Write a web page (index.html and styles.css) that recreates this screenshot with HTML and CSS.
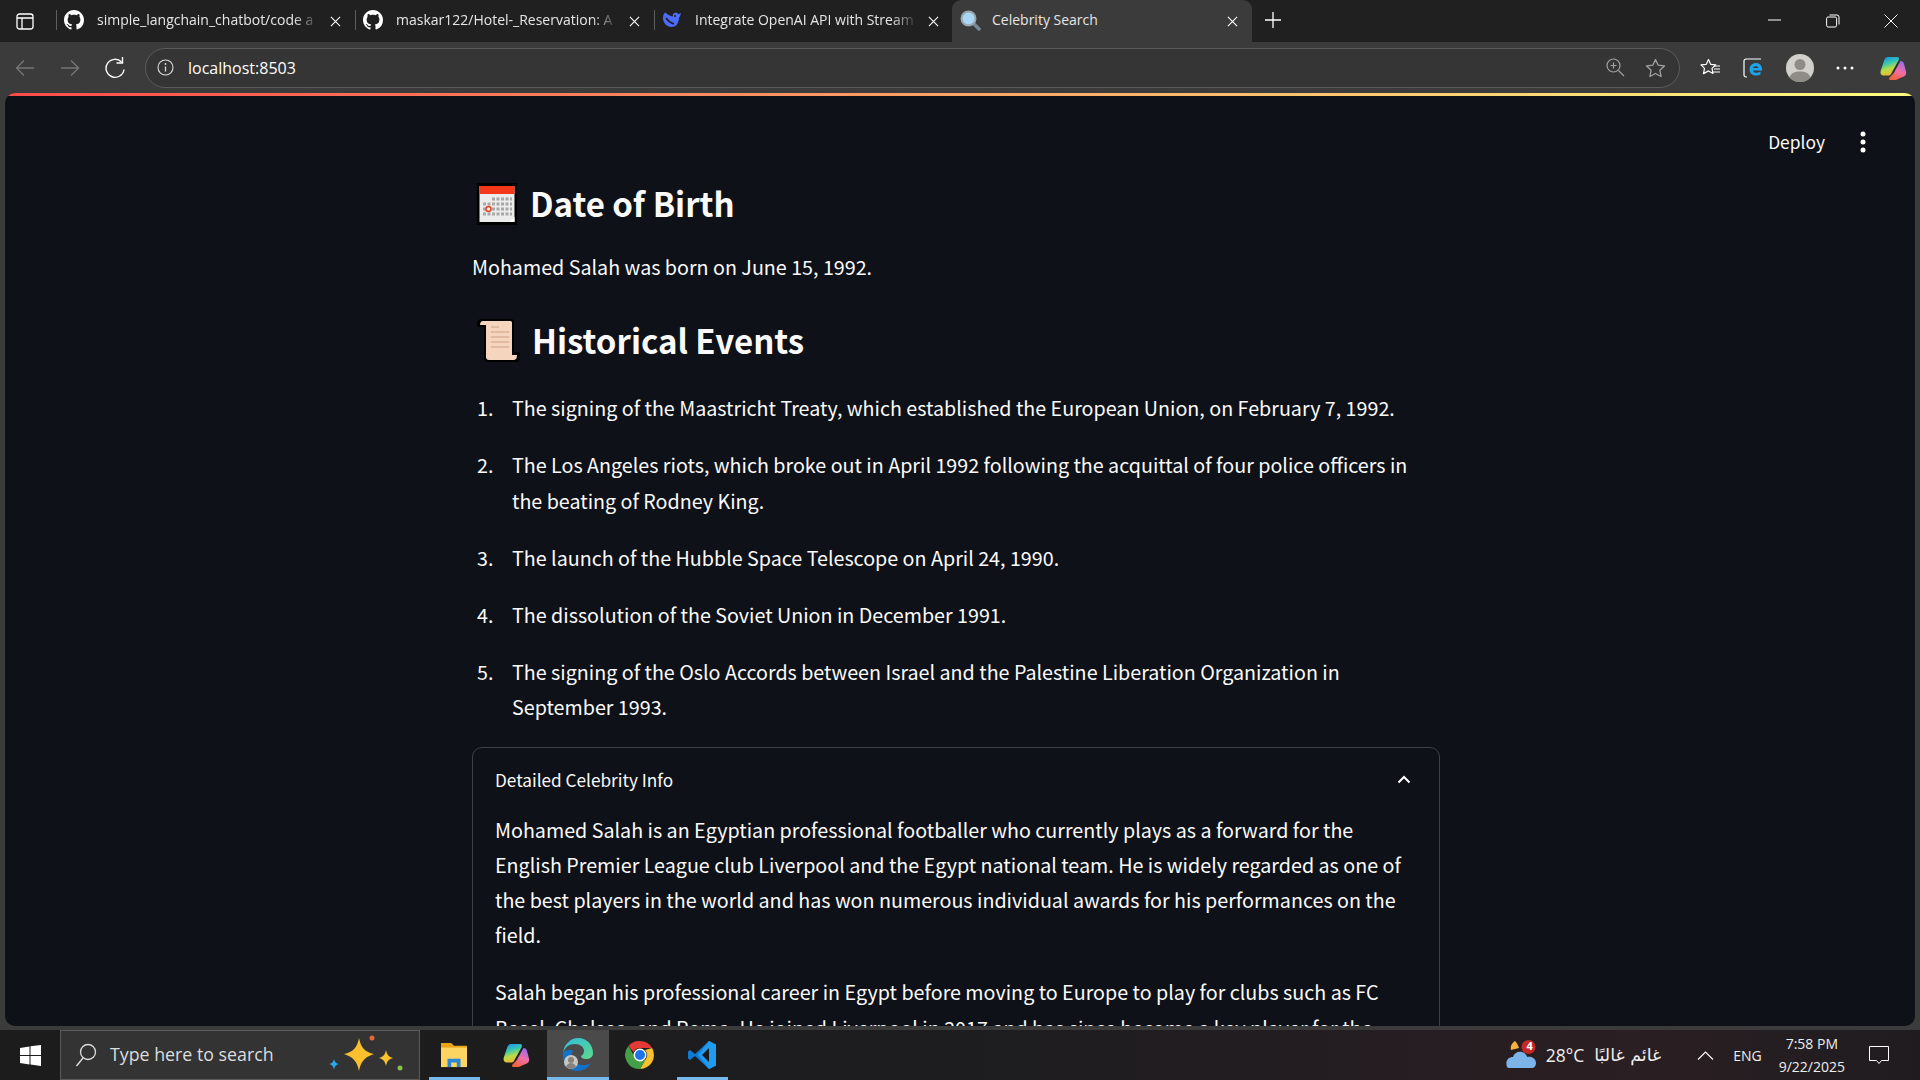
FILE: index.html
```html
<!DOCTYPE html>
<html lang="en">
<head>
    <meta charset="UTF-8">
    <meta name="viewport" content="width=device-width, initial-scale=1.0">
    <title>Celebrity Search</title>
    <link rel="stylesheet" href="styles.css">
</head>
<body>
    <svg class="defs" width="0" height="0">
        <symbol id="close" viewBox="0 0 12 12"><path d="M1 1l10 10M11 1L1 11" fill="none" stroke="currentColor" stroke-width="1.2"/></symbol>
        <symbol id="github" viewBox="0 0 16 16"><path fill="#fff" d="M8 0C3.58 0 0 3.58 0 8c0 3.54 2.29 6.53 5.47 7.59.4.07.55-.17.55-.38 0-.19-.01-.82-.01-1.49-2.01.37-2.53-.49-2.69-.94-.09-.23-.48-.94-.82-1.13-.28-.15-.68-.52-.01-.53.63-.01 1.08.58 1.23.82.72 1.21 1.87.87 2.33.66.07-.52.28-.87.51-1.07-1.78-.2-3.64-.89-3.64-3.95 0-.87.31-1.59.82-2.15-.08-.2-.36-1.02.08-2.12 0 0 .67-.21 2.2.82.64-.18 1.32-.27 2-.27.68 0 1.36.09 2 .27 1.53-1.04 2.2-.82 2.2-.82.44 1.1.16 1.92.08 2.12.51.56.82 1.27.82 2.15 0 3.07-1.87 3.75-3.65 3.95.29.25.54.73.54 1.48 0 1.07-.01 1.93-.01 2.2 0 .21.15.46.55.38A8.013 8.013 0 0016 8c0-4.42-3.58-8-8-8z"/></symbol>
        <linearGradient id="copA" x1="0.2" y1="0" x2="0.5" y2="1"><stop offset="0" stop-color="#1e8ff0"/><stop offset=".35" stop-color="#35c7b0"/><stop offset=".65" stop-color="#b5dc4a"/><stop offset="1" stop-color="#f7b42e"/></linearGradient>
        <linearGradient id="copB" x1="0.7" y1="0" x2="0.3" y2="1"><stop offset="0" stop-color="#9a6bf0"/><stop offset=".5" stop-color="#ef6fa8"/><stop offset="1" stop-color="#f5603a"/></linearGradient>
        <symbol id="copilot" viewBox="0 0 28 28">
            <path fill="url(#copA)" d="M9 3h9c2 0 2.500 1.200 1.500 3.500L13 18c-1 2-1.500 3.500-3.500 3.500H5C2 21.500 1 19.500 1.800 16.500L5 7C5.800 4.500 7 3 9 3z"/>
            <path fill="url(#copB)" d="M21.500 7c2 0 3 1.300 3.500 3l2 7.500c.7 3-1 5-3.500 5.500L19 25c-1 .7-2 1-3.500 1h-4c-1.500 0-2-1-1-2.500l4-4z"/>
            <path d="M19.500 8L14 19" stroke="#2a2a2a" stroke-width="1"/>
        </symbol>
    </svg>

    <div class="tabstrip">
        <svg class="side-btn" width="18" height="17" viewBox="0 0 18 17"><rect x="1" y="1" width="16" height="15" rx="2.500" fill="none" stroke="#fff" stroke-width="1.300"/><path d="M1 5h16M6 5v11" stroke="#fff" stroke-width="1.300" fill="none"/></svg>
        <div class="tab">
            <svg class="fav" width="20" height="20"><use href="#github"/></svg>
            <span class="tab-title">simple_langchain_chatbot/code a</span>
            <svg class="tab-close" width="11" height="11"><use href="#close"/></svg>
        </div>
        <div class="tab">
            <svg class="fav" width="20" height="20"><use href="#github"/></svg>
            <span class="tab-title">maskar122/Hotel-_Reservation: A</span>
            <svg class="tab-close" width="11" height="11"><use href="#close"/></svg>
        </div>
        <div class="tab">
            <svg class="fav" width="20" height="20" viewBox="0 0 20 20"><path fill="#4d6bfe" d="M19 3c-1 .6-1.800.8-2.600 1C15.500 3 14 2.500 12.500 3c-1.500.6-2 2-1.600 3.500C8 6 5.500 4.500 3.500 2.500 2 3 1 5 1 8c0 4.500 3.500 9 8.500 9 3 0 5.200-1.500 6.300-4 .4-1 1.200-2.500 1.200-5 .8-1 1.500-2.800 2-5z"/><path d="M4 8c2 3 5 5 8 6" stroke="#1f1f1f" stroke-width="1.500" fill="none"/><circle cx="13" cy="6" r="1" fill="#1f1f1f"/></svg>
            <span class="tab-title">Integrate OpenAI API with Stream</span>
            <svg class="tab-close" width="11" height="11"><use href="#close"/></svg>
        </div>
        <div class="tab tab-active">
            <svg class="fav" width="21" height="21" viewBox="0 0 21 21"><path d="M13 13l6 6" stroke="#7b8794" stroke-width="3.500" stroke-linecap="round"/><circle cx="8.500" cy="8.500" r="7" fill="#a9d6f2" stroke="#9aa5ad" stroke-width="2"/></svg>
            <span class="tab-title">Celebrity Search</span>
            <svg class="tab-close" width="11" height="11"><use href="#close"/></svg>
        </div>
        <svg class="new-tab" width="16" height="16" viewBox="0 0 16 16"><path d="M8 0v16M0 8h16" stroke="#fff" stroke-width="1.300"/></svg>
        <div class="win-btns">
            <svg width="14" height="14" viewBox="0 0 14 14"><path d="M0 6h13" stroke="#fff" stroke-width="1"/></svg>
            <svg width="14" height="14" viewBox="0 0 14 14"><rect x=".6" y="3" width="10" height="10" rx="1.500" fill="none" stroke="#fff"/><path d="M3.500 1h7.500a2 2 0 012 2v7.500" fill="none" stroke="#fff"/></svg>
            <svg width="14" height="14" viewBox="0 0 14 14"><path d="M.5.5l13 13M13.500.5l-13 13" stroke="#fff" stroke-width="1"/></svg>
        </div>
    </div>

    <div class="toolbar">
        <div class="nav-btns">
            <svg width="20" height="20" viewBox="0 0 20 20"><path d="M19 10H1.500M9 2.500L1.500 10 9 17.500" fill="none" stroke="#767676" stroke-width="1.300"/></svg>
            <svg width="20" height="20" viewBox="0 0 20 20"><path d="M1 10h17.500M11 2.500l7.500 7.500-7.500 7.500" fill="none" stroke="#767676" stroke-width="1.300"/></svg>
            <svg width="20" height="22" viewBox="0 0 20 22"><path d="M16.500 5A9 9 0 1019 12.500" fill="none" stroke="#fff" stroke-width="1.400"/><path d="M17.500 0v6h-6" fill="none" stroke="#fff" stroke-width="1.400"/></svg>
        </div>
        <div class="address">
            <svg width="17" height="17" viewBox="0 0 17 17"><circle cx="8.500" cy="8.500" r="7.500" fill="none" stroke="#ddd" stroke-width="1.100"/><path d="M8.500 7.500v5" stroke="#ddd" stroke-width="1.300"/><circle cx="8.500" cy="5" r=".9" fill="#ddd"/></svg>
            <span class="url">localhost:8503</span>
            <svg class="addr-zoom" width="19" height="19" viewBox="0 0 19 19"><circle cx="7.500" cy="7.500" r="6.500" fill="none" stroke="#a0a0a0" stroke-width="1.200"/><path d="M12.500 12.500l5.500 5.500M7.500 4.500v6M4.500 7.500h6" stroke="#a0a0a0" stroke-width="1.200"/></svg>
            <svg width="21" height="20" viewBox="0 0 21 20"><path d="M10.500 1.500l2.700 5.700 6.300.8-4.600 4.300 1.200 6.200-5.600-3-5.600 3 1.200-6.200L1.500 8l6.300-.8z" fill="none" stroke="#a0a0a0" stroke-width="1.300" stroke-linejoin="round"/></svg>
        </div>
        <div class="tool-icons">
            <svg width="21" height="20" viewBox="0 0 21 20"><path d="M8.500 1.500l2.200 4.800 5 .6-3.700 3.500 1 5-4.500-2.500-5 2.700 1-5.200L1 6.900l5.300-.6z" fill="none" stroke="#fff" stroke-width="1.200" stroke-linejoin="round"/><path d="M14 8h6M14 11h6M13 14h7" stroke="#fff" stroke-width="1.100"/></svg>
            <svg width="21" height="20" viewBox="0 0 21 20"><path d="M4 19H3a2 2 0 01-2-2V3a2 2 0 012-2h15" fill="none" stroke="#fff" stroke-width="1.200"/><path d="M6.500 11.500C6.500 7.500 9.500 5 13 5s6 2.500 6 6.500v1h-9c.3 2.800 4.500 3 7.500 1v3c-4 2-11 1.500-11-5.500zm3.500-1.500h5.500c-.3-2.500-5-2.500-5.500 0z" fill="#1ea4e9"/></svg>
            <svg width="28" height="28" viewBox="0 0 28 28"><circle cx="14" cy="14" r="14" fill="#d2d0cb"/><circle cx="14" cy="10.500" r="5.500" fill="#8f8c87"/><path d="M3.500 23.500C5 19 9 17.500 14 17.500s9 1.500 10.500 6A14 14 0 013.500 23.500z" fill="#8f8c87"/></svg>
            <svg width="18" height="4" viewBox="0 0 18 4"><circle cx="2" cy="2" r="1.500" fill="#fff"/><circle cx="9" cy="2" r="1.500" fill="#fff"/><circle cx="16" cy="2" r="1.500" fill="#fff"/></svg>
            <svg class="tool-copilot" width="28" height="28"><use href="#copilot"/></svg>
        </div>
    </div>

    <div class="app">
        <div class="decoration"></div>
        <div class="app-header">
            <span class="deploy">Deploy</span>
            <svg width="6" height="22" viewBox="0 0 6 22"><circle cx="3" cy="3" r="2.500" fill="#fff"/><circle cx="3" cy="11" r="2.500" fill="#fff"/><circle cx="3" cy="19" r="2.500" fill="#fff"/></svg>
        </div>
        <div class="main-wrap">
            <div class="main">
                <h2 class="emoji-head">
                    <svg class="emoji" width="42" height="42" viewBox="0 0 42 42">
                        <rect width="40" height="42" fill="#000"/>
                        <rect x="2.500" y="3" width="35" height="36" fill="#ececec"/>
                        <rect x="2.500" y="3" width="35" height="8" fill="#f4391b"/>
                        <g stroke="#a8a8a8" stroke-width="3" stroke-dasharray="3 1.500" fill="none">
                            <path d="M15 16h20M6 21h29M6 26h29M6 31h29"/>
                        </g>
                        <circle cx="11.500" cy="26" r="2.500" fill="#ececec" stroke="#e8421f" stroke-width="1.500"/>
                        <path d="M37.500 34l-5 5h5z" fill="#fff"/>
                    </svg>
                    <span>Date of Birth</span>
                </h2>
                <p class="para">Mohamed Salah was born on June 15, 1992.</p>
                <h2 class="emoji-head emoji-head-2">
                    <svg class="emoji" width="44" height="43" viewBox="0 0 44 43">
                        <path d="M6 0h28c2 0 3 1 3 3v30h6v5c0 3-2 5-5 5H11c-3 0-4-2-4-4V8H2C0 8 0 6 0 4c0-3 2-4 6-4z" fill="#000"/>
                        <path d="M6 2h27c2 0 2 1 2 2v32h5c0 3-1 5-4 5H12c-2 0-3-1-3-3V6H3c0-2 1-4 3-4z" fill="#f6d5bf"/>
                        <path d="M14 8h8M14 13h18M14 18h18M14 23h18M14 28h18" stroke="#c9a184" stroke-width="1.200"/>
                    </svg>
                    <span>Historical Events</span>
                </h2>
                <ol class="events">
                    <li>The signing of the Maastricht Treaty, which established the European Union, on February 7, 1992.</li>
                    <li>The Los Angeles riots, which broke out in April 1992 following the acquittal of four police officers in the beating of Rodney King.</li>
                    <li>The launch of the Hubble Space Telescope on April 24, 1990.</li>
                    <li>The dissolution of the Soviet Union in December 1991.</li>
                    <li>The signing of the Oslo Accords between Israel and the Palestine Liberation Organization in September 1993.</li>
                </ol>
                <div class="expander">
                    <div class="exp-head">
                        <span>Detailed Celebrity Info</span>
                        <svg width="14" height="9" viewBox="0 0 14 9"><path d="M1.500 7.500L7 2l5.500 5.500" fill="none" stroke="#fff" stroke-width="2"/></svg>
                    </div>
                    <div class="exp-body">
                        <p>Mohamed Salah is an Egyptian professional footballer who currently plays as a forward for the English Premier League club Liverpool and the Egypt national team. He is widely regarded as one of the best players in the world and has won numerous individual awards for his performances on the field.</p>
                        <p>Salah began his professional career in Egypt before moving to Europe to play for clubs such as FC Basel, Chelsea, and Roma. He joined Liverpool in 2017 and has since become a key player for the team.</p>
                    </div>
                </div>
            </div>
        </div>
    </div>

    <div class="taskbar">
        <svg class="start" width="21" height="21" viewBox="0 0 21 21"><path fill="#fff" d="M0 3l9.500-1.500V10H0zM10.500 1.300L21 0v10H10.500zM0 11h9.500v8.500L0 18zM10.500 11H21v10l-10.500-1.400z"/></svg>
        <div class="search">
            <svg width="22" height="24" viewBox="0 0 22 24"><circle cx="13" cy="9" r="7.500" fill="none" stroke="#ddd" stroke-width="1.300"/><path d="M8 15l-6.500 8" stroke="#ddd" stroke-width="1.300"/></svg>
            <span class="search-text">Type here to search</span>
            <svg class="sparkle" width="76" height="44" viewBox="0 0 76 44">
                <path d="M30 5c2 10 6 14 15 16-9 3-13 7-15 17-2-10-6-14-15-17 9-2 13-6 15-16z" fill="#fbc02d"/>
                <path d="M57 17c1 5 3 7 7 8-4 1-6 3-7 8-1-5-3-7-7-8 4-1 6-3 7-8z" fill="#fbc02d"/>
                <path d="M5 26c.6 3 2 4.500 5 5-3 .8-4.400 2-5 6-.6-4-2-5.200-5-6 3-.5 4.400-2 5-5z" fill="#29a9f0"/>
                <circle cx="43" cy="5" r="2.500" fill="#e2693a"/><circle cx="71" cy="35" r="2.500" fill="#8bc34a"/>
            </svg>
        </div>
        <div class="task-apps">
            <div class="task-app task-open">
                <svg width="28" height="26" viewBox="0 0 30 28"><path d="M1 1h11l3 3h14v23H1z" fill="#e8a317"/><rect x="1" y="6" width="28" height="21" fill="#fcd462"/><path d="M8 27v-9h14v9h-4v-5h-6v5z" fill="#2a86d9"/></svg>
            </div>
            <div class="task-app">
                <svg width="28" height="28"><use href="#copilot"/></svg>
            </div>
            <div class="task-app task-active">
                <svg width="32" height="34" viewBox="0 0 32 34">
                    <defs><linearGradient id="edgeG" x1="0" y1="0" x2="1" y2="1"><stop offset="0" stop-color="#2fbce0"/><stop offset="1" stop-color="#5fd88a"/></linearGradient></defs>
                    <path d="M1 15C2 6 9 0 16 0c9 0 15 7 15 15 0 4-3 6-7 6-3 0-5-1-5-3 2-1 3-3 3-5 0-4-4-7-9-7-6 0-10 3-12 9z" fill="url(#edgeG)"/>
                    <path d="M1 15c-1 9 5 18 14 18 6 0 11-3 14-8-5 3-11 3-15 0-4-3-5-9-3-13-5 0-9 0-10 3z" fill="#1173c9"/>
                    <circle cx="9" cy="24" r="7" fill="#c9c7c2"/><circle cx="9" cy="22" r="3" fill="#86837e"/><path d="M4 29c1-3 3-4 5-4s4 1 5 4a7 7 0 01-10 0z" fill="#86837e"/>
                </svg>
            </div>
            <div class="task-app">
                <svg width="30" height="30" viewBox="0 0 30 30">
                    <path d="M15 1a14 14 0 0112.100 7H15a7 7 0 00-6.500 4.300L3.500 6A14 14 0 0115 1z" fill="#e53935"/>
                    <path d="M27.100 8A14 14 0 0115 29l6.100-10.500A7 7 0 0020 10z" fill="#fbc02d"/>
                    <path d="M3.500 6l6 10.500A7 7 0 0021.100 18.500L15 29A14 14 0 013.500 6z" fill="#43a047"/>
                    <circle cx="15" cy="15" r="6.500" fill="#fff"/><circle cx="15" cy="15" r="5" fill="#1e73e8"/>
                </svg>
            </div>
            <div class="task-app task-open">
                <svg width="30" height="30" viewBox="0 0 30 30">
                    <path d="M22 1l7 3.500v21L22 29 8 16l-5 4-2-1.500v-7L3 10l5 4z" fill="#0e7ad1"/>
                    <path d="M22 1L11 15l11 14 7-3.500v-21z" fill="#1f9cf0"/>
                    <path d="M22 8v14l-7-7z" fill="#1a1a1a"/>
                </svg>
            </div>
        </div>
        <div class="tray">
            <svg class="weather" width="31" height="30" viewBox="0 0 31 30">
                <path d="M9 1c-3 2-5 5-4 9l8-2c-1-3-2-5-4-7z" fill="#f7b23b"/>
                <path d="M1 27c-2-6 1-10 6-10 1-4 5-6 9-5 3 1 5 3 5 5 5-1 9 2 9 6 0 3-2 5-4 5H4c-1 0-2 0-3-1z" fill="#7cb4ea"/>
                <circle cx="22.500" cy="7" r="7" fill="#c62828"/>
            </svg>
            <span class="weather-num">4</span>
            <span class="temp">28°C</span>
            <span class="cond" lang="ar" dir="rtl">غائم غالبًا</span>
            <svg class="tray-up" width="17" height="9" viewBox="0 0 17 9"><path d="M1 8.500L8.500 1 16 8.500" fill="none" stroke="#fff" stroke-width="1.100"/></svg>
            <span class="lang">ENG</span>
            <div class="clock"><span>7:58 PM</span><span>9/22/2025</span></div>
            <svg class="notif" width="20" height="19" viewBox="0 0 20 19"><path d="M.5.500h19v14h-7L10 17.500 7.500 14.500h-7z" fill="none" stroke="#fff" stroke-width="1"/></svg>
        </div>
    </div>
</body>
</html>
```

FILE: styles.css
```css
*{
    margin:0;
    padding:0;
    box-sizing:border-box;
}
html,body{
    width:1920px;
    height:1080px;
    overflow:hidden;
}
body{
    display:flex;
    flex-direction:column;
    background:#3b3b3b;
    color:#fff;
    font-family:"Open Sans","Noto Sans",sans-serif;
}
.defs{
    position:absolute;
}

/* tab strip */
.tabstrip{
    height:42px;
    flex:none;
    display:flex;
    align-items:center;
    background:#202020;
    padding-left:16px;
}
.side-btn{
    margin-right:22px;
}
.tab{
    width:299px;
    height:42px;
    display:flex;
    align-items:center;
    padding-left:8px;
    padding-right:14px;
    position:relative;
    font-size:14px;
    color:#e6e6e6;
}
.tab:before{
    content:"";
    position:absolute;
    left:0;
    top:10px;
    height:20px;
    width:1px;
    background:#5f5f5f;
}
.fav{
    flex:none;
    margin-right:13px;
    margin-top:-2px;
}
.tab-title{
    flex:1;
    white-space:nowrap;
    overflow:hidden;
    line-height:39px;
    height:42px;
    -webkit-mask-image:linear-gradient(to right,#000 88%,transparent);
    mask-image:linear-gradient(to right,#000 88%,transparent);
}
.tab-close{
    flex:none;
    margin-left:10px;
    color:#fff;
}
.tab-active{
    width:300px;
    background:#3b3b3b;
    border-radius:9px 9px 0 0;
    margin-left:-1px;
}
.tab-active:before{
    display:none;
}
.tab-active .fav{
    margin-right:11px;
}
.tab-active .tab-title{
    -webkit-mask-image:none;
    mask-image:none;
}
.new-tab{
    margin-left:13px;
    margin-top:-2px;
}
.win-btns{
    margin-left:auto;
    display:flex;
    gap:44px;
    padding-right:22px;
}

/* toolbar */
.toolbar{
    height:51px;
    flex:none;
    display:flex;
    align-items:center;
    background:#3b3b3b;
    padding-left:15px;
}
.nav-btns{
    display:flex;
    align-items:center;
    gap:25px;
    margin-right:20px;
}
.address{
    width:1535px;
    height:40px;
    display:flex;
    align-items:center;
    border:1px solid #5c5c5c;
    border-radius:20px;
    background:#353535;
    padding:0 13px 0 11px;
}
.url{
    margin-left:14px;
    font-size:16px;
    color:#fff;
}
.addr-zoom{
    margin-left:auto;
    margin-right:20px;
}
.tool-icons{
    display:flex;
    align-items:center;
    gap:22px;
    margin-left:20px;
}
.tool-copilot{
    margin-left:3px;
}

/* streamlit app */
.app{
    flex:1;
    min-height:0;
    margin:0 5px;
    background:#0e1117;
    border-radius:10px;
    overflow:hidden;
    font-family:"Noto Sans CJK SC","Source Sans Pro",sans-serif;
    color:#fafafa;
    font-size:19.7px;
    line-height:35.2px;
}
.decoration{
    height:3px;
    background:linear-gradient(90deg,#ff4b4b,#fffd80);
}
.app-header{
    height:46px;
    margin-top:23px;
    display:flex;
    align-items:center;
    justify-content:flex-end;
    gap:35px;
    padding-right:49px;
}
.deploy{
    font-size:17.4px;
}
.main-wrap{
    padding-right:8px;
}
.main{
    width:968px;
    margin:15px auto 0;
}
.emoji-head{
    display:flex;
    align-items:center;
    gap:11px;
    font-size:33px;
    font-weight:600;
    line-height:47px;
    padding-left:5px;
    color:#fafafa;
}
.emoji{
    flex:none;
}
.emoji-head-2{
    margin-top:33px;
}
.para{
    margin-top:22px;
}
.events{
    margin-top:26px;
    list-style:none;
    counter-reset:item;
}
.events li{
    display:grid;
    grid-template-columns:40px 1fr;
    margin-bottom:22px;
    counter-increment:item;
}
.events li:before{
    content:counter(item) ".";
    padding-left:5px;
}
.events li:last-child{
    margin-bottom:0;
}
.expander{
    margin-top:22px;
    border:1px solid #3d4046;
    border-radius:10px;
    padding:0 22px;
    height:500px;
}
.exp-head{
    height:64px;
    display:flex;
    align-items:center;
    justify-content:space-between;
    font-size:17.2px;
    padding-right:6px;
}
.exp-body p{
    margin-bottom:22px;
}

/* taskbar */
.taskbar{
    height:50px;
    flex:none;
    margin-top:4px;
    display:flex;
    align-items:center;
    background:linear-gradient(90deg,#1c1c1c 0%,#1d1d1f 50%,#241d22 70%,#2a1f22 85%,#1f1c20 100%);
    color:#eee;
    position:relative;
}
.start{
    margin-left:20px;
    margin-right:19px;
}
.search{
    width:360px;
    height:50px;
    display:flex;
    align-items:center;
    background:#333;
    border:1px solid #5a5a5a;
    padding-left:14px;
}
.search-text{
    margin-left:13px;
    margin-top:-2px;
    font-size:17.8px;
    color:#ddd;
}
.sparkle{
    margin-left:auto;
    margin-right:14px;
}
.task-apps{
    display:flex;
    margin-left:3px;
}
.task-app{
    width:62px;
    height:50px;
    display:flex;
    align-items:center;
    justify-content:center;
    position:relative;
}
.task-active{
    background:#4a4a4a;
}
.task-open:after,.task-active:after{
    content:"";
    position:absolute;
    left:6px;
    right:5px;
    bottom:0;
    height:3px;
    background:#76b9ed;
}
.task-active:after{
    left:0;
    right:0;
}
.tray{
    margin-left:auto;
    display:flex;
    align-items:center;
    height:50px;
    padding-right:31px;
    position:relative;
    font-size:16px;
}
.weather-num{
    position:absolute;
    left:17px;
    top:8px;
    width:14px;
    text-align:center;
    font-size:11px;
    font-weight:700;
    color:#fff;
}
.temp{
    margin-left:9px;
    font-size:17.5px;
}
.cond{
    margin-left:10px;
    font-family:"DejaVu Sans",sans-serif;
    font-size:17.5px;
}
.tray-up{
    margin-left:36px;
}
.lang{
    margin-left:19px;
    font-size:14px;
}
.clock{
    display:flex;
    flex-direction:column;
    align-items:center;
    margin-left:17px;
    font-size:14px;
    line-height:23px;
}
.notif{
    margin-left:24px;
}
```
